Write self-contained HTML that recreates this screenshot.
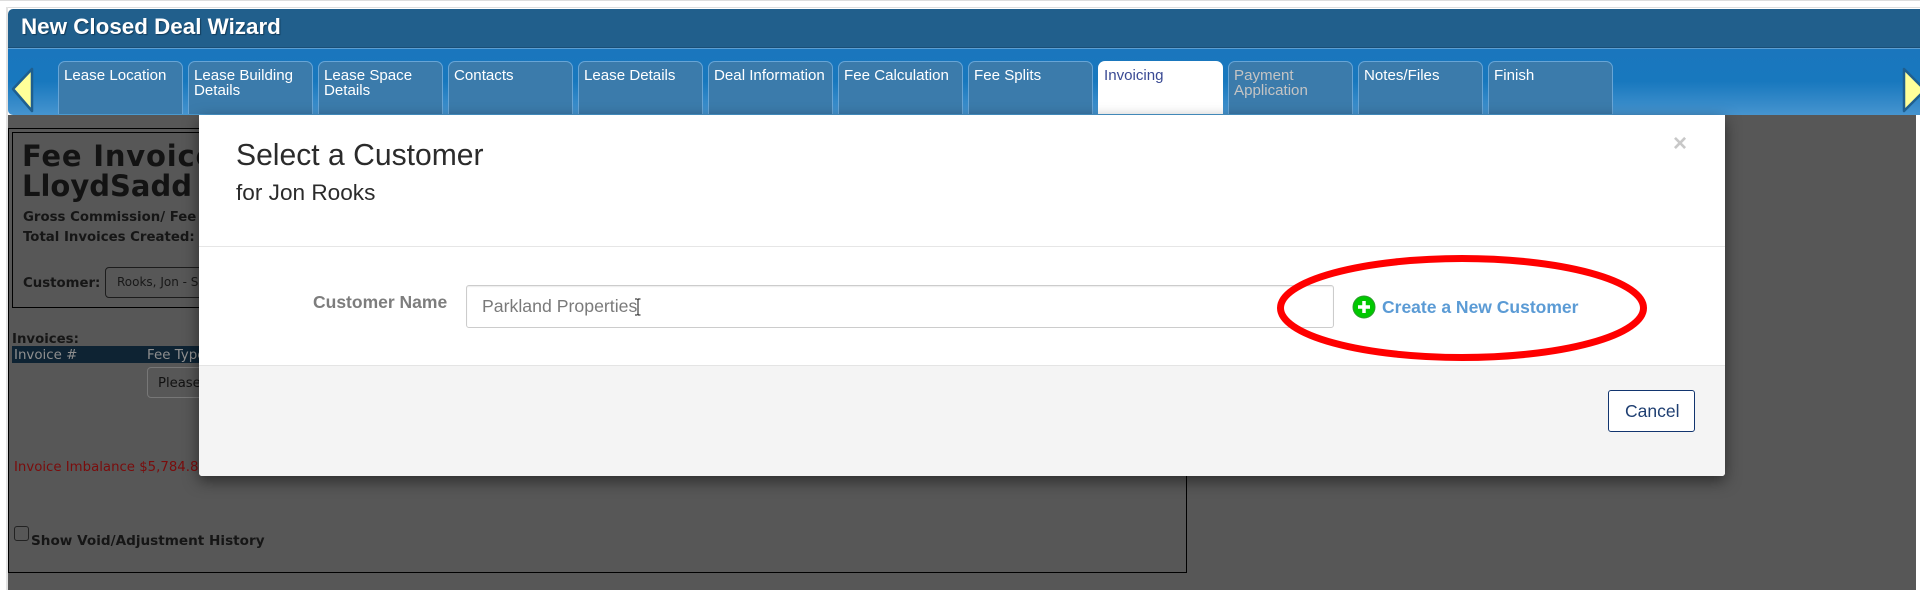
<!DOCTYPE html>
<html>
<head>
<meta charset="utf-8">
<title>New Closed Deal Wizard</title>
<style>
html,body{margin:0;padding:0;width:1920px;height:590px;overflow:hidden;background:#fff;}
body{position:relative;font-family:"Liberation Sans",Arial,sans-serif;}
.a{position:absolute;}
.t{position:absolute;white-space:nowrap;}
.v{font-family:"DejaVu Sans",Verdana,sans-serif;}
.tab{position:absolute;top:61px;width:123px;height:53px;background:#3b7bab;border:1px solid #68a5d6;border-bottom:none;border-radius:7px 7px 0 0;color:#fff;font-size:15.1px;line-height:15px;padding:0;}
.tab span{position:absolute;left:5px;top:6px;white-space:nowrap;}
</style>
</head>
<body>
<div class="a" style="left:0;top:0;width:1920px;height:1px;background:#ddd"></div>
<div class="a" style="left:6px;top:7px;width:1914px;height:1px;background:#ddd"></div>
<div class="a" style="left:6px;top:7px;width:2px;height:583px;background:#e2e2e2"></div>

<!-- Dimmed page -->
<div class="a" style="left:8px;top:115px;width:1908px;height:475px;background:#575757;overflow:hidden">
  <div class="a" style="left:0;top:13px;width:1177px;height:443px;border:1px solid #000"></div>
  <div class="a" style="left:4px;top:17px;width:1173px;height:174px;border:1px solid #000"></div>
</div>
<div class="t v" style="left:22px;top:141px;font-size:29px;line-height:30px;font-weight:bold;color:#131313"><span style="letter-spacing:.8px">Fee Invoice</span><br>LloydSadd</div>
<div class="t v" style="left:23px;top:210px;font-size:13.3px;line-height:16px;font-weight:bold;color:#161616">Gross Commission/ Fee</div>
<div class="t v" style="left:23px;top:230px;font-size:13.3px;line-height:16px;font-weight:bold;color:#161616">Total Invoices Created:</div>
<div class="t v" style="left:23px;top:276px;font-size:13.3px;line-height:16px;font-weight:bold;color:#161616">Customer:</div>
<div class="a" style="left:105px;top:267px;width:150px;height:29px;border:1px solid #1c1c1c;border-radius:4px"></div>
<div class="t v" style="left:117px;top:274px;font-size:12px;line-height:16px;color:#181818">Rooks, Jon - S</div>
<div class="t v" style="left:12px;top:332px;font-size:13.3px;line-height:16px;font-weight:bold;color:#161616">Invoices:</div>
<div class="a" style="left:12px;top:346px;width:1174px;height:17px;background:#0e2333"></div>
<div class="t v" style="left:14px;top:348px;font-size:13.4px;line-height:15px;color:#8f8f8f">Invoice #</div>
<div class="t v" style="left:147px;top:348px;font-size:13.4px;line-height:15px;color:#8f8f8f">Fee Type</div>
<div class="a" style="left:147px;top:367px;width:150px;height:29px;border:1px solid #777;border-radius:4px"></div>
<div class="t v" style="left:158px;top:376px;font-size:13.2px;line-height:16px;color:#111">Please</div>
<div class="t v" style="left:14px;top:460px;font-size:13.3px;line-height:16px;color:#7a0c0c">Invoice Imbalance $5,784.81</div>
<div class="a" style="left:14px;top:526px;width:13px;height:13px;border:1px solid #222;border-radius:3px"></div>
<div class="t v" style="left:31px;top:533px;font-size:13.6px;line-height:16px;font-weight:bold;color:#161616">Show Void/Adjustment History</div>

<!-- Header -->
<div class="a" style="left:8px;top:9px;width:1912px;height:38px;background:#215f8c;border-radius:5px 0 0 0;border-bottom:1px solid #1b4f76"></div>
<div class="t" style="left:21px;top:13px;font-size:22.4px;line-height:28px;font-weight:bold;color:#fff;text-shadow:1px 1px 1px #123a58">New Closed Deal Wizard</div>
<div class="a" style="left:8px;top:48px;width:1912px;height:67px;background:linear-gradient(#5c9fd3 0,#5c9fd3 1px,#1a76bd 1px,#1878be 50%,#4694cf 100%);border-radius:0 0 0 5px"></div>

<div class="tab" style="left:58px"><span>Lease Location</span></div>
<div class="tab" style="left:188px"><span>Lease Building<br>Details</span></div>
<div class="tab" style="left:318px"><span>Lease Space<br>Details</span></div>
<div class="tab" style="left:448px"><span>Contacts</span></div>
<div class="tab" style="left:578px"><span>Lease Details</span></div>
<div class="tab" style="left:708px"><span>Deal Information</span></div>
<div class="tab" style="left:838px"><span>Fee Calculation</span></div>
<div class="tab" style="left:968px"><span>Fee Splits</span></div>
<div class="tab" style="left:1098px;background:#fff;border-color:#fff;color:#3a4a94"><span>Invoicing</span></div>
<div class="tab" style="left:1228px;color:#c4c4c4"><span>Payment<br>Application</span></div>
<div class="tab" style="left:1358px"><span>Notes/Files</span></div>
<div class="tab" style="left:1488px"><span>Finish</span></div>
<div class="a" style="left:58px;top:114px;width:1555px;height:1px;background:#4a9ad0"></div>

<svg class="a" style="left:8px;top:62px" width="30" height="56"><polygon points="5,27 24,7 24,49" fill="#ffff99" stroke="#1f5f8f" stroke-width="2.5" stroke-linejoin="round"/></svg>
<svg class="a" style="left:1895px;top:62px" width="25" height="56"><polygon points="9,7 30,28 9,49" fill="#ffff99" stroke="#1f5f8f" stroke-width="2.5" stroke-linejoin="round"/></svg>

<!-- Modal -->
<div class="a" style="left:199px;top:115px;width:1526px;height:361px;background:#fff;box-shadow:0 5px 15px rgba(0,0,0,.5);border-radius:0 0 3px 3px;overflow:hidden">
  <div class="a" style="left:0;top:131px;width:1526px;height:1px;background:#e6e6e6"></div>
  <div class="a" style="left:0;top:250px;width:1526px;height:111px;background:#f4f4f4;border-top:1px solid #e4e4e4;box-sizing:border-box"></div>
</div>
<div class="t" style="left:236px;top:138px;font-size:30.1px;line-height:36px;color:#2b2b2b">Select a Customer</div>
<div class="t" style="left:236px;top:180px;font-size:22.6px;line-height:26px;color:#2b2b2b">for Jon Rooks</div>
<div class="t" style="left:1673px;top:131px;font-size:24px;line-height:26px;font-weight:bold;color:#c8c8c8">×</div>
<div class="t" style="left:313px;top:291px;font-size:17.5px;line-height:22px;font-weight:bold;color:#7d7d7d">Customer Name</div>
<div class="a" style="left:466px;top:285px;width:866px;height:41px;border:1px solid #ccc;border-radius:3px;background:#fff;box-shadow:inset 0 1px 1px rgba(0,0,0,.075)"></div>
<div class="t" style="left:482px;top:295px;font-size:17.7px;line-height:22px;color:#7a7a7a">Parkland Properties</div>
<svg class="a" style="left:633px;top:298px" width="10" height="18"><path d="M2 1H4.5M7.5 1H5M5 1V17M2 17H4.5M7.5 17H5" fill="none" stroke="#111" stroke-width="1"/></svg>

<svg class="a" style="left:1350px;top:293px" width="28" height="28"><circle cx="14" cy="14" r="11" fill="#00c800" stroke="#2c9c2c" stroke-width="1"/><path d="M14 8V20M8 14H20" stroke="#fff" stroke-width="3.5" fill="none"/></svg>
<div class="t" style="left:1382px;top:296px;font-size:17.5px;line-height:22px;font-weight:bold;color:#5b9bd5">Create a New Customer</div>

<svg class="a" style="left:1270px;top:250px" width="384" height="118"><ellipse cx="192" cy="58" rx="181.5" ry="49.5" fill="none" stroke="#ff0000" stroke-width="7"/></svg>

<div class="a" style="left:1608px;top:390px;width:85px;height:40px;background:#fff;border:1px solid #12356f;border-radius:3px"></div>
<div class="t" style="left:1625px;top:400px;font-size:17.5px;line-height:22px;color:#1f3f72">Cancel</div>
</body>
</html>
